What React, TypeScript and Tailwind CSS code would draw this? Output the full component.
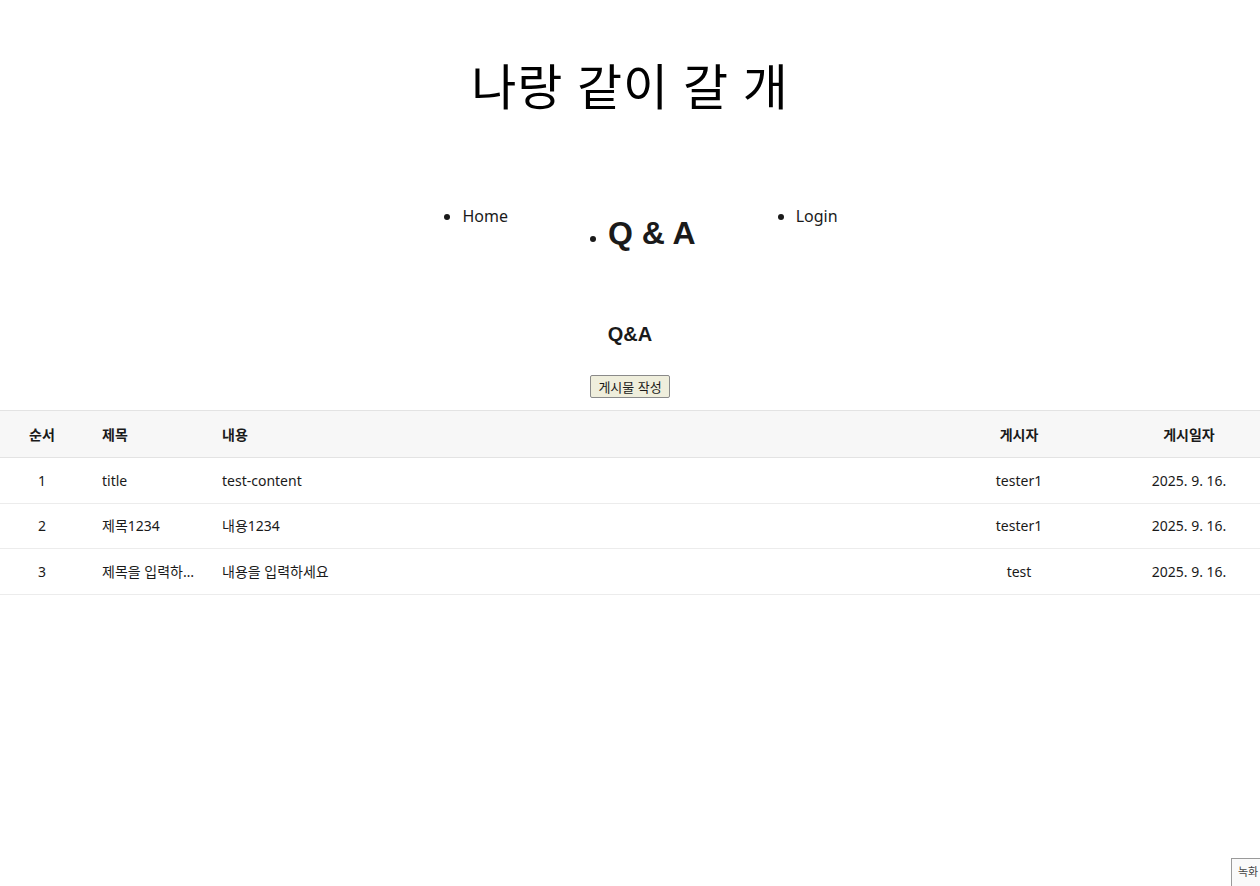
const rows = [
  { id: 1, title: 'title', content: 'test-content', writer: 'tester1', date: '2025. 9. 16.' },
  { id: 2, title: '제목1234', content: '내용1234', writer: 'tester1', date: '2025. 9. 16.' },
  { id: 3, title: '제목을 입력하세요', content: '내용을 입력하세요', writer: 'test', date: '2025. 9. 16.' },
]

const Header = () => { // Site title + nav
  return (
    <header className="flex flex-col items-center">
      <h1 className="mt-[53px] text-[49px] leading-[66px] tracking-[1px] text-black">나랑 같이 갈 개</h1>
      <ul className="mt-[88px] flex justify-center items-start gap-[100px] pl-10 list-disc text-[16px]">
        <li className="leading-[18px]">Home</li>
        <li className="mt-[11px]">
          <span className="font-['Liberation_Sans',sans-serif] font-bold text-[32px] leading-[30px]">Q &amp; A</span>
        </li>
        <li className="leading-[18px]">Login</li>
      </ul>
    </header>
  )
}

const Board = () => { // Q&A list table
  return (
    <section className="mt-[73px] flex flex-col items-center">
      <h2 className="font-['Liberation_Sans',sans-serif] font-bold text-[20px] leading-[22px]">Q&amp;A</h2>
      <button
        type="button"
        className="mt-[30px] h-[23px] px-[7px] text-[13px] leading-[18px] bg-[#efeedc] border border-[#8a8a8a] rounded-[2px]">
          게시물 작성
      </button>
      <div className="mt-[12px] w-full text-[14px]">
        <div className="flex items-center h-[48px] bg-[#f7f7f7] border-t border-b border-[#e3e3e3] font-bold">
          <div className="w-[84px] text-center">순서</div>
          <div className="w-[120px] pl-[18px]">제목</div>
          <div className="flex-1 pl-[18px]">내용</div>
          <div className="w-[198px] text-center">게시자</div>
          <div className="w-[142px] text-center">게시일자</div>
        </div>
        {rows.map((row) => (
          <div key={row.id} className="flex items-center h-[45.5px] border-b border-[#ececec]">
            <div className="w-[84px] text-center">{row.id}</div>
            <div className="w-[120px] pl-[18px] pr-[4px] truncate">{row.title}</div>
            <div className="flex-1 pl-[18px]">{row.content}</div>
            <div className="w-[198px] text-center">{row.writer}</div>
            <div className="w-[142px] text-center">{row.date}</div>
          </div>
        ))}
      </div>
    </section>
  )
}

export default function App() {
  return (
    <div className="relative min-h-[886px] overflow-hidden bg-white text-[#1a1a1a] font-['Noto_Sans','Noto_Sans_CJK_KR',sans-serif]">
      <Header />
      <Board />
      <div className="absolute left-[1231px] top-[858px] h-[30px] w-[40px] border border-[#9a9a9a] bg-[#fafafa] pl-[6px] pt-[5px] text-[11px] text-[#444]">녹화</div>
    </div>
  )
}
